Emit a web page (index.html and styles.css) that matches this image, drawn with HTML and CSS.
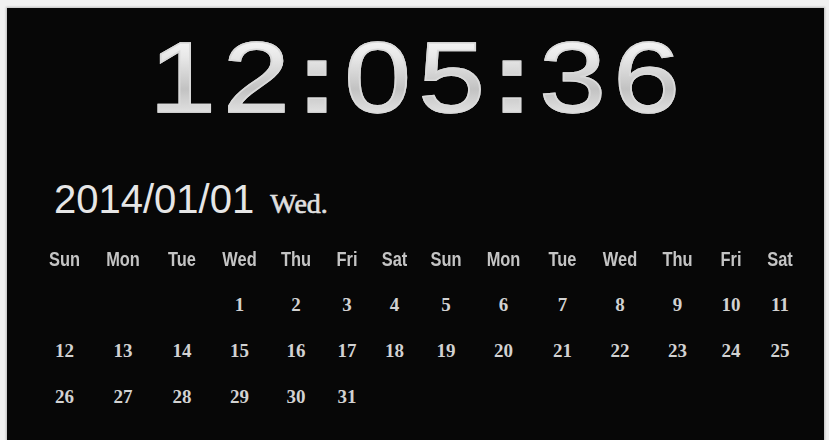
FILE: index.html
```html
<!DOCTYPE html>
<html>
<head>
<meta charset="utf-8">
<link rel="stylesheet" href="styles.css">
</head>
<body>
<div class="screen">
  <div class="clock-row"><div class="clock">12<span class="sep">:</span>05<span class="sep">:</span>36</div></div>
  <div class="date"><span class="ymd">2014/01/01</span><span class="dow">Wed.</span></div>
  <div class="cal">
    <div class="hd">Sun</div><div class="hd">Mon</div><div class="hd">Tue</div><div class="hd">Wed</div><div class="hd">Thu</div><div class="hd">Fri</div><div class="hd">Sat</div>
    <div class="hd">Sun</div><div class="hd">Mon</div><div class="hd">Tue</div><div class="hd">Wed</div><div class="hd">Thu</div><div class="hd">Fri</div><div class="hd">Sat</div>

    <div class="d"></div><div class="d"></div><div class="d"></div>
    <div class="d">1</div><div class="d">2</div><div class="d">3</div><div class="d">4</div>
    <div class="d">5</div><div class="d">6</div><div class="d">7</div><div class="d">8</div><div class="d">9</div><div class="d">10</div><div class="d">11</div>

    <div class="d">12</div><div class="d">13</div><div class="d">14</div><div class="d">15</div><div class="d">16</div><div class="d">17</div><div class="d">18</div>
    <div class="d">19</div><div class="d">20</div><div class="d">21</div><div class="d">22</div><div class="d">23</div><div class="d">24</div><div class="d">25</div>

    <div class="d">26</div><div class="d">27</div><div class="d">28</div><div class="d">29</div><div class="d">30</div><div class="d">31</div>
  </div>
</div>
</body>
</html>
```

FILE: styles.css
```css
html, body {
  margin: 0;
  padding: 0;
  background: #f1f1f1;
}

.screen {
  margin: 8px 5px 0 7px;
  height: 432px;
  background: #070707;
  box-shadow: 0 0 2px 1px #bdbdbd;
  overflow: hidden;
}

.clock-row {
  padding-top: 19px;
  display: flex;
  justify-content: center;
  height: 100px;
}

.clock {
  display: inline-block;
  font-family: "Liberation Sans", Arial, sans-serif;
  font-size: 100px;
  line-height: 100px;
  letter-spacing: 6px;
  margin-right: -6px;
  transform: scaleX(1.2);
  background: linear-gradient(180deg, #ffffff 0%, #e8e8e8 30%, #c2c2c2 62%, #e6e6e6 90%, #d2d2d2 100%);
  -webkit-background-clip: text;
  background-clip: text;
  color: transparent;
  -webkit-text-stroke: 1.5px #dadada;
}

.sep {
  font-weight: bold;
}

.date {
  margin-top: 49px;
  padding-left: 47px;
  line-height: 46px;
  height: 46px;
  color: #e6e6e6;
  white-space: nowrap;
}

.ymd {
  font-family: "Liberation Sans", Arial, sans-serif;
  font-size: 40px;
}

.dow {
  font-family: "Liberation Serif", "Times New Roman", serif;
  font-size: 28px;
  margin-left: 16px;
  color: #e0e0e0;
  -webkit-text-stroke: 0.6px #e0e0e0;
}

.cal {
  margin-top: 25px;
  padding-left: 29px;
  display: grid;
  grid-template-columns: 57px 60px 58px 57px 56px 46px 49px 54px 61px 57px 58px 57px 50px 48px;
  grid-auto-rows: 24px;
  row-gap: 22px;
}

.hd {
  font-family: "Liberation Sans", Arial, sans-serif;
  font-weight: bold;
  font-size: 20px;
  line-height: 24px;
  color: #c4c4c4;
  text-align: center;
  transform: scaleX(0.82);
}

.d {
  font-family: "Liberation Serif", "Times New Roman", serif;
  font-weight: bold;
  font-size: 19px;
  line-height: 24px;
  color: #d2d2d2;
  text-align: center;
}
```
